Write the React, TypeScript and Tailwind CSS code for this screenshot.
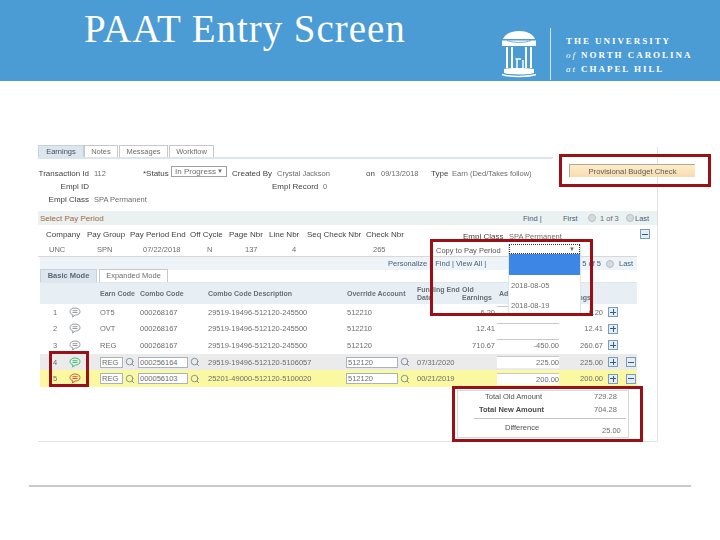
import { Search } from "lucide-react";

const sans = "font-['Liberation_Sans',Arial,sans-serif]";
const label = "font-normal text-[8px] text-[#3f3f3f]";

const columns = "grid grid-cols-[20px_38px_38px_69px_140px_72px_43px_37px_62px_46px_17px_15px]";

type Row = {
  n: string;
  color: string;
  earn: string;
  combo: string;
  desc: string;
  account: string;
  end?: string;
  old?: string;
  adj: string;
  next: string;
  bg: string;
  edit?: boolean;
};

const rows: Row[] = [
  { n: "1", color: "#8a8f94", earn: "OT5", combo: "000268167", desc: "29519-19496-512120-245500", account: "512210", old: "6.20", adj: "", next: "6.20", bg: "bg-white" },
  { n: "2", color: "#8a8f94", earn: "OVT", combo: "000268167", desc: "29519-19496-512120-245500", account: "512210", old: "12.41", adj: "", next: "12.41", bg: "bg-white" },
  { n: "3", color: "#8a8f94", earn: "REG", combo: "000268167", desc: "29519-19496-512120-245500", account: "512120", old: "710.67", adj: "-450.00", next: "260.67", bg: "bg-white" },
  { n: "4", color: "#39b86a", earn: "REG", combo: "000256164", desc: "29519-19496-512120-5106057", account: "512120", end: "07/31/2020", adj: "225.00", next: "225.00", bg: "bg-[#ebebeb]", edit: true },
  { n: "5", color: "#d8453c", earn: "REG", combo: "000056103", desc: "25201-49000-512120-5100020", account: "512120", end: "00/21/2019", adj: "200.00", next: "200.00", bg: "bg-[#fbf8a2]", edit: true },
];

function Bubble({ color }: { color: string }) {
  return (
    <svg width="12" height="11" viewBox="0 0 12 11" fill="none" stroke={color} strokeWidth="0.9">
      <path d="M6 1C3 1 1 2.500 1 4.600C1 6.300 2.400 7.500 4 7.900L3.500 10L6.300 8.100C9.200 8 11 6.600 11 4.600C11 2.500 9 1 6 1Z" />
      <path d="M3.500 3.700H8.500M3.500 5.500H8.500" />
    </svg>
  );
}

function RoundArrow() {
  return <span className="w-[8px] h-[8px] rounded-full bg-[#d5dadf] border border-[#b8bfc6] inline-block" />;
}

function SquareBtn({ minus }: { minus?: boolean }) {
  return (
    <span className="w-[10px] h-[10px] border border-[#7d9cbc] bg-[#e3edf6] flex items-center justify-center relative">
      <span className="w-[6px] h-px bg-[#2f5f92]" />
      {!minus && <span className="absolute w-px h-[6px] bg-[#2f5f92]" />}
    </span>
  );
}

function Lens() {
  return <Search size={10} strokeWidth={2} className="text-[#6f8296]" />;
}

function OldWell() {
  return (
    <svg width="36" height="47" viewBox="0 0 36 47" fill="none" stroke="#fff">
      <path d="M2 8C4 3 10 0 18 0C26 0 32 3 34 8Z" fill="#fff" stroke="none" />
      <path d="M1 9.500H35V15H1Z" fill="#fff" stroke="none" />
      <path d="M6 9.500C12 12 24 12 30 9.500" stroke="#4b9bd5" strokeWidth="0.8" />
      <path d="M6 16V37M11 16V37M25 16V37M30 16V37" strokeWidth="2" />
      <path d="M16 28V37M22 29V37M14.500 28H20" strokeWidth="1.400" />
      <path d="M3 38C9 36.500 27 36.500 33 38V42C27 44 9 44 3 42Z" fill="#fff" stroke="none" />
      <path d="M1 43.500C8 46 28 46 35 43.500" strokeWidth="1.500" />
    </svg>
  );
}

export default function App() {
  return (
    <div className={`relative w-[720px] h-[540px] bg-white overflow-hidden ${sans}`}>
      <header className="h-[81px] bg-[#4b9bd5] flex text-white">
        <h1 className="ml-[84px] mt-[6px] w-[400px] font-['Liberation_Serif',serif] text-[39px] leading-[46px] tracking-[0.95px] h-fit">
          PAAT Entry Screen
        </h1>
        <div className="ml-[17px] mt-[31px] h-[47px]">
          <OldWell />
        </div>
        <div className="ml-[13px] mt-[28px] w-px h-[52px] bg-[#cfe4f3]" />
        <div className="ml-[15px] mt-[34px] font-['Liberation_Serif',serif] font-bold text-[9px] leading-[14px] tracking-[1.95px] whitespace-nowrap">
          <div>THE UNIVERSITY</div>
          <div>
            <i className="font-normal">of</i> NORTH CAROLINA
          </div>
          <div>
            <i className="font-normal">at</i> CHAPEL HILL
          </div>
        </div>
      </header>

      <main className="ml-[38px] mt-[66px] w-[620px] h-[295px] border-r border-b border-[#e2e2e2] text-[7.5px] leading-[9px] text-[#6d6d6d] blur-[0.4px]">
        <div className="flex w-[515px] h-[12px] border-b-2 border-[#dce5ec] items-end">
          <span className="h-[12px] w-[46px] bg-[#dce6ef] border-t border-x border-[#c5d2de] text-center text-[#46505a] pt-px">Earnings</span>
          <span className="h-[12px] w-[34px] border-t border-x border-[#c8c8c8] text-center pt-px">Notes</span>
          <span className="h-[12px] w-[49px] border-t border-x border-[#c8c8c8] text-center pt-px ml-px">Messages</span>
          <span className="h-[12px] w-[45px] border-t border-x border-[#c8c8c8] text-center pt-px ml-px">Workflow</span>
        </div>

        <div className="flex items-center w-[680px] h-[14px] mt-[7px] whitespace-nowrap">
          <b className={`w-[51px] text-right ${label}`}>Transaction Id</b>
          <span className="ml-[5px] w-[49px]">112</span>
          <b className={`w-[28px] ${label}`}>*Status</b>
          <span className="w-[56px] h-[11px] border border-[#9aa0a6] flex justify-between px-[3px] -mt-[3px] text-[8px]">
            In Progress <span className="text-[6px]">▼</span>
          </span>
          <b className={`ml-[5px] w-[45px] ${label}`}>Created By</b>
          <span className="w-[89px]">Crystal Jackson</span>
          <b className={`w-[15px] ${label}`}>on</b>
          <span className="w-[50px]">09/13/2018</span>
          <b className={`w-[21px] ${label}`}>Type</b>
          <span className="w-[117px]">Earn (Ded/Takes follow)</span>
          <span className="w-[126px] h-[13px] -mt-[6px] border-l border-t border-[#b8a88e] bg-gradient-to-b from-[#fdeccb] to-[#f8dcae] text-center text-[7.7px] text-[#5a5a5a] leading-[13px]">
            Provisional Budget Check
          </span>
        </div>

        <div className="flex items-center h-[13px] whitespace-nowrap">
          <b className={`w-[51px] text-right ${label}`}>Empl ID</b>
          <b className={`ml-[183px] w-[46px] ${label}`}>Empl Record</b>
          <span className="ml-[5px]">0</span>
        </div>

        <div className="flex items-center h-[12px] whitespace-nowrap">
          <b className={`w-[51px] text-right ${label}`}>Empl Class</b>
          <span className="ml-[5px]">SPA Permanent</span>
        </div>

        <div className="mt-[6px] h-[14px] bg-[#e9f1f1] flex items-center relative pl-[2px] whitespace-nowrap">
          <span className="text-[#a8673f] text-[8px] w-[483px]">Select Pay Period</span>
          <span className="w-[40px] text-[#47607a]">Find |</span>
          <span className="w-[25px] text-[#47607a]">First</span>
          <RoundArrow />
          <span className="ml-[4px] w-[26px]">1 of 3</span>
          <RoundArrow />
          <span className="ml-[1px] text-[#47607a]">Last</span>
        </div>

        <div className="grid grid-cols-[41px_43px_60px_39px_40px_38px_97px_97px_46px_82px] pl-[8px] w-[599px] h-[32px] pt-[5px] border-b border-[#d8d8d8] whitespace-nowrap relative">
          <b className={label}>Company</b>
          <b className={label}>Pay Group</b>
          <b className={label}>Pay Period End</b>
          <b className={label}>Off Cycle</b>
          <b className={label}>Page Nbr</b>
          <b className={label}>Line Nbr</b>
          <b className={`${label} w-[59px]`}>Seq Check Nbr</b>
          <b className={`${label} w-[40px] -ml-[38px]`}>Check Nbr</b>
          <b className={`${label} -ml-[38px] mt-[2px]`}>Empl Class</b>
          <span className="-ml-[38px] mt-[2px]">SPA Permanent</span>
          <span className="pl-[3px] pt-[1px]">UNC</span>
          <span className="pl-[10px] pt-[1px]">SPN</span>
          <span className="pl-[13px] pt-[1px]">07/22/2018</span>
          <span className="pl-[17px] pt-[1px]">N</span>
          <span className="pl-[16px] pt-[1px]">137</span>
          <span className="pl-[23px] pt-[1px]">4</span>
          <span />
          <span className="-ml-[31px] pt-[1px]">265</span>
          <span className="absolute left-[602px] top-[4px]">
            <SquareBtn minus />
          </span>
        </div>

        <div className="w-[597px] ml-[2px] h-[13px] bg-[#edf3f6] flex items-center whitespace-nowrap text-[#47607a]">
          <span className="ml-[348px]">Personalize |</span>
          <span className="ml-[4px] w-[147px]">Find | View All |</span>
          <span>5 of 5</span>
          <span className="mx-[5px] flex">
            <RoundArrow />
          </span>
          <span>Last</span>
        </div>

        <div className="ml-[2px] w-[597px] h-[13px] flex items-end border-b border-[#dfe6ec] gap-[2px]">
          <span className="h-[13px] w-[57px] bg-[#dce6ef] border-t border-x border-[#c5d2de] text-center font-bold text-[#5c6773] pt-px">
            Basic Mode
          </span>
          <span className="h-[13px] w-[69px] border-t border-x border-[#c8c8c8] text-center pt-px">Expanded Mode</span>
        </div>

        <div className={`${columns} ml-[2px] w-[597px] h-[21px] bg-[#e8eff4] items-center font-bold text-[7px] leading-[8px] text-[#66707a]`}>
          <span />
          <span />
          <span className="pl-[2px] whitespace-nowrap">Earn Code</span>
          <span className="pl-[4px]">Combo Code</span>
          <span className="pl-[3px]">Combo Code Description</span>
          <span className="pl-[2px]">Override Account</span>
          <span>Funding End Date</span>
          <span className="pl-[2px]">Old Earnings</span>
          <span className="pl-[2px]">Adj</span>
          <span className="pl-[2px]">New Earnings</span>
          <span />
          <span />
        </div>

        {rows.map((row) => (
          <div key={row.n} className={`${columns} ml-[2px] w-[597px] h-[16.6px] items-center whitespace-nowrap ${row.bg}`}>
            <span className="pl-[13px]">{row.n}</span>
            <span className="pl-[9px]">
              <Bubble color={row.color} />
            </span>
            {row.edit ? (
              <span className="flex items-center gap-[2px] pl-[2px]">
                <span className="w-[23px] h-[11px] bg-white border border-[#aab2ba] pl-px leading-[9px]">{row.earn}</span>
                <Lens />
              </span>
            ) : (
              <span className="pl-[2px]">{row.earn}</span>
            )}
            {row.edit ? (
              <span className="flex items-center gap-[2px] pl-[2px]">
                <span className="w-[50px] h-[11px] bg-white border border-[#aab2ba] pl-px leading-[9px]">{row.combo}</span>
                <Lens />
              </span>
            ) : (
              <span className="pl-[4px]">{row.combo}</span>
            )}
            <span className="pl-[3px]">{row.desc}</span>
            {row.edit ? (
              <span className="flex items-center gap-[2px] pl-[1px]">
                <span className="w-[52px] h-[11px] bg-white border border-[#aab2ba] pl-px leading-[9px]">{row.account}</span>
                <Lens />
              </span>
            ) : (
              <span className="pl-[2px]">{row.account}</span>
            )}
            <span className="overflow-visible">{row.end}</span>
            <span className="text-right pr-[2px]">{row.old}</span>
            <span className="h-[12px] bg-white border-t border-[#c8c8c8] text-right leading-[11px]">{row.adj}</span>
            <span className="text-right pr-[2px]">{row.next}</span>
            <span className="pl-[3px]">
              <SquareBtn />
            </span>
            <span className="pl-[4px]">{row.edit && <SquareBtn minus />}</span>
          </div>
        ))}

        <div className="ml-[419px] mt-[3px] w-[172px] h-[48px] border border-[#d8d8d8] relative whitespace-nowrap">
          <div className="flex h-[12px] items-center">
            <span className="ml-[27px] w-[109px] text-[#4f4f4f]">Total Old Amount</span>
            <span>729.28</span>
          </div>
          <div className="flex h-[13px] items-center">
            <b className="ml-[21px] w-[115px] text-[#4a4a4a]">Total New Amount</b>
            <span>704.28</span>
          </div>
          <div className="ml-[16px] w-[152px] h-px bg-[#c4c4c4] mt-[2px]" />
          <div className="flex mt-[4px]">
            <span className="ml-[47px] w-[97px] text-[#4f4f4f]">Difference</span>
            <span className="mt-[3px]">25.00</span>
          </div>
        </div>
      </main>

      <div className="ml-[29px] mt-[43px] w-[662px] h-[2px] bg-[#c9c9c9]" />

      {/* copy to pay period overlay */}
      <div className="absolute left-[436px] top-[246px] text-[7.5px] leading-[9px] text-[#555] whitespace-nowrap blur-[0.4px]">
        Copy to Pay Period
      </div>
      <div className="absolute left-[508px] top-[244px] w-[73px] h-[71px] bg-white border-x border-[#dbe5ee] text-[7.5px] leading-[9px] text-[#6d6d6d] blur-[0.4px]">
        <div className="h-[10px] border border-dotted border-[#333] flex justify-end pr-[4px] text-[6px]">▼</div>
        <div className="h-[21px] bg-[#3d86e6]" />
        <div className="pl-[2px] mt-[6px]">2018-08-05</div>
        <div className="pl-[2px] mt-[11px]">2018-08-19</div>
      </div>

      {/* red call-outs */}
      <div className="absolute left-[559px] top-[154px] w-[152px] h-[33px] border-[3px] border-[#9a1016]" />
      <div className="absolute left-[430px] top-[239px] w-[163px] h-[77px] border-[3px] border-[#9a1016]" />
      <div className="absolute left-[49px] top-[351px] w-[40px] h-[36px] border-[3px] border-[#9a1016]" />
      <div className="absolute left-[452px] top-[386px] w-[191px] h-[56px] border-[3px] border-[#9a1016]" />
    </div>
  );
}
